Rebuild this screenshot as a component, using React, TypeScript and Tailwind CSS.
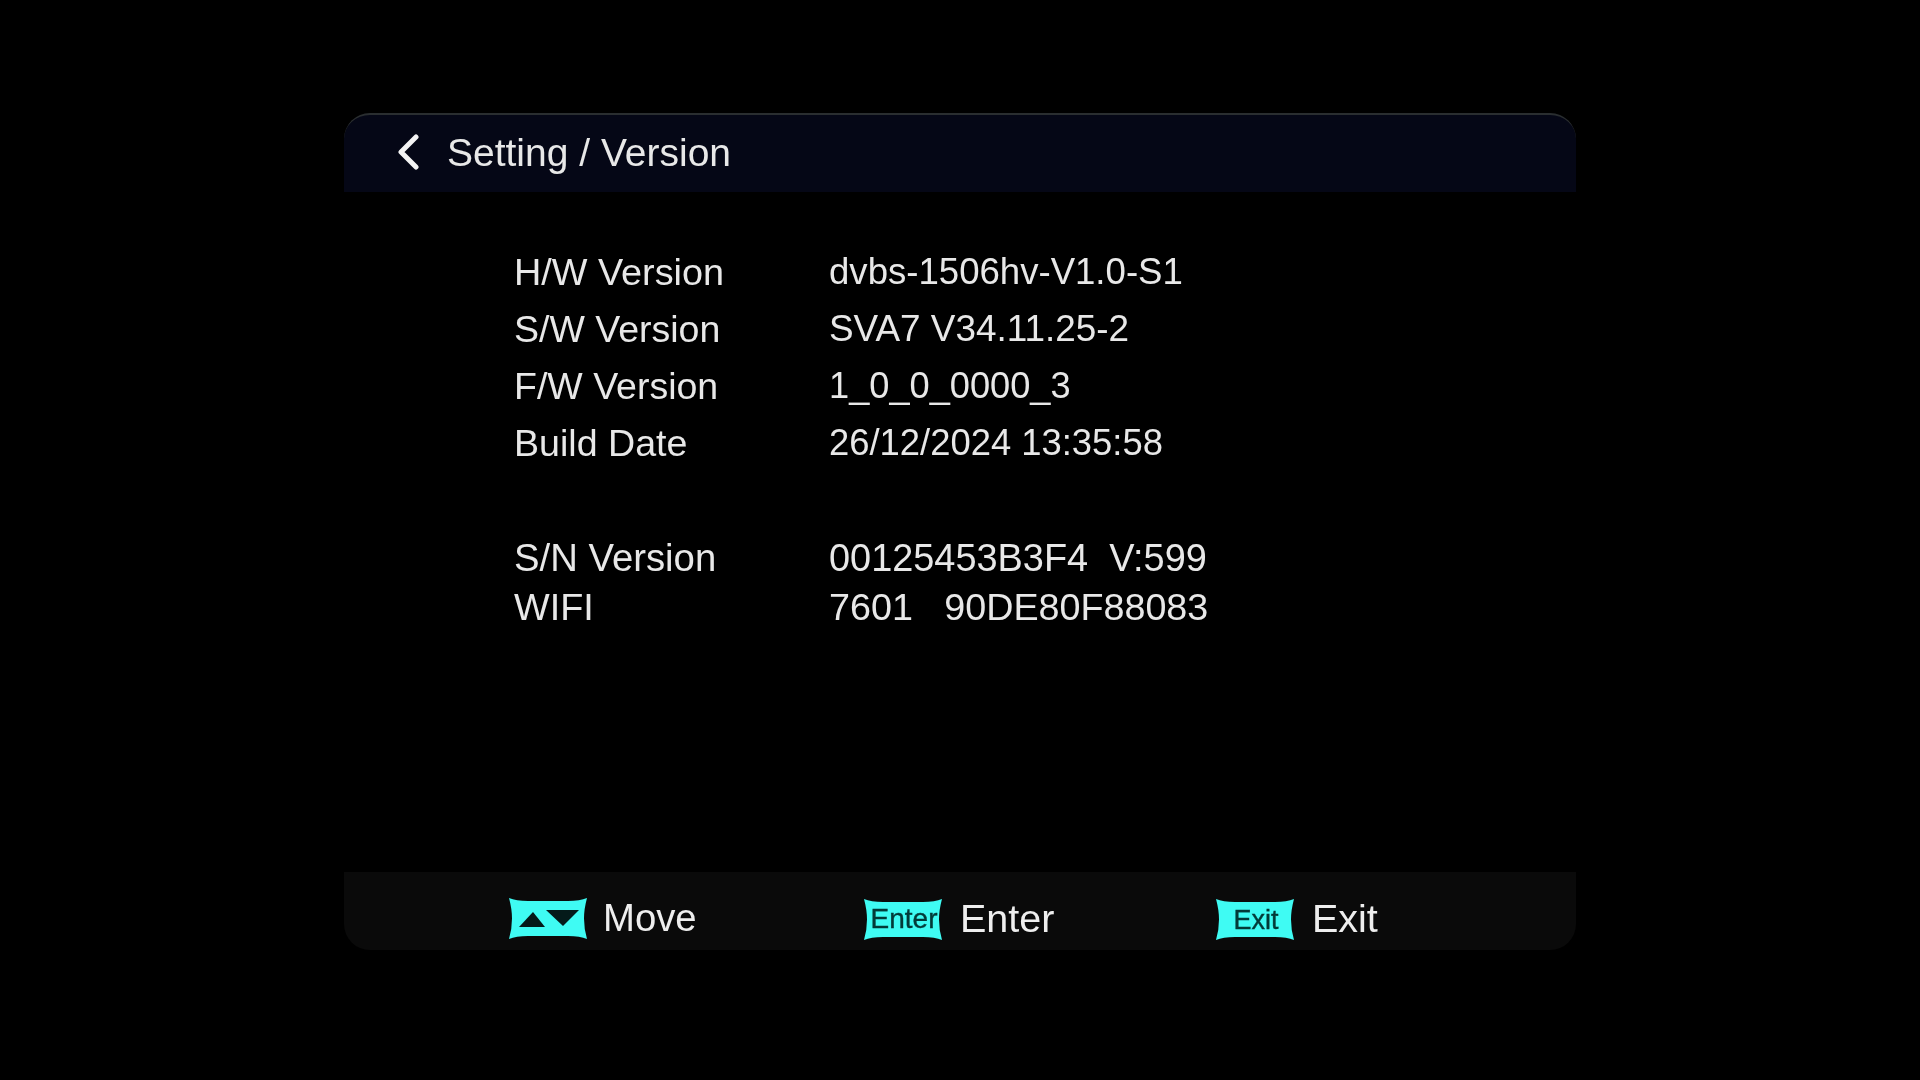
const font = { fontFamily: '"Liberation Sans", Arial, sans-serif' };

function Key({ label, arrows, fs = 27, y = 31 }: { label?: string; arrows?: boolean; fs?: number; y?: number }) {
  return (
    <svg width="80" height="43" viewBox="0 0 80 43" className="block shrink-0">
      <path d="M1 1 Q8 4 20 4 L60 4 Q72 4 79 1 Q76 12 76 21.5 Q76 32 79 42 Q72 39 60 39 L20 39 Q8 39 1 42 Q4 32 4 21.5 Q4 12 1 1 Z" fill="#3ffbf3" />
      {arrows && (
        <>
          <path d="M11 30 L25 15 L37 30 Z" fill="#041a1a" />
          <path d="M38 13 L71 13 L55 29 Z" fill="#041a1a" />
        </>
      )}
      {label && (
        <text x="41" y={y} textAnchor="middle" fontSize={fs} fill="#033a38" stroke="#033a38" strokeWidth="0.4" fontFamily='"Liberation Sans", Arial, sans-serif'>
          {label}
        </text>
      )}
    </svg>
  );
}

function Row({ k, v, h, kc, vc }: { k: string; v: string; h: string; kc: string; vc: string }) {
  return (
    <div className={`flex items-center ${h}`}>
      <div className={`w-[315px] shrink-0 ${kc}`}>{k}</div>
      <div className={`whitespace-pre ${vc}`}>{v}</div>
    </div>
  );
}

export default function App() {
  return (
    <div className="w-[1920px] h-[1080px] bg-black overflow-hidden flex flex-col items-center pt-[113px]" style={font}>
      <div className="w-[1232px] h-[837px] flex flex-col text-[#e8e8e8] blur-[0.4px]">
        <div className="h-[79px] shrink-0 bg-[#050716] rounded-t-[26px] border-t-2 border-[#2a2e30] flex items-center pl-[52px] pb-[3px]">
          <svg width="26" height="36" viewBox="0 0 26 36" className="shrink-0 -mt-[1px]">
            <path d="M20 3 L5 18 L20 33" fill="none" stroke="#f4f4f4" strokeWidth="5" strokeLinecap="round" strokeLinejoin="round" />
          </svg>
          <span className="ml-[25px] text-[39px] leading-none">Setting / Version</span>
        </div>
        <div className="flex-1 pl-[170px] pt-[52px] leading-none">
          <Row k="H/W Version" v="dvbs-1506hv-V1.0-S1" h="h-[57px]" kc="text-[37.8px]" vc="text-[36.6px]" />
          <Row k="S/W Version" v="SVA7 V34.11.25-2" h="h-[57px]" kc="text-[37.5px]" vc="text-[36.9px]" />
          <Row k="F/W Version" v="1_0_0_0000_3" h="h-[57px]" kc="text-[37.5px]" vc="text-[36.2px]" />
          <Row k="Build Date" v="26/12/2024 13:35:58" h="h-[57px]" kc="text-[37.6px]" vc="text-[36.4px]" />
          <div className="h-[62px]" />
          <Row k="S/N Version" v="00125453B3F4  V:599" h="h-[49px]" kc="text-[38.3px]" vc="text-[37.9px]" />
          <Row k="WIFI" v="7601   90DE80F88083" h="h-[49px]" kc="text-[37.8px]" vc="text-[37.7px]" />
        </div>
        <div className="h-[78px] shrink-0 bg-[#0a0a0a] rounded-b-[26px] flex items-center pl-[164px] text-[#eeeeee] leading-none">
          <div className="flex items-center w-[355px] pt-[14px]">
            <Key arrows />
            <span className="ml-[15px] text-[38.3px]">Move</span>
          </div>
          <div className="flex items-center w-[352px] pt-[16px]">
            <Key label="Enter" fs={28} y={30} />
            <span className="ml-[17px] text-[39.5px]">Enter</span>
          </div>
          <div className="flex items-center pt-[16px]">
            <Key label="Exit" />
            <span className="ml-[17px] text-[39.5px]">Exit</span>
          </div>
        </div>
      </div>
    </div>
  );
}
